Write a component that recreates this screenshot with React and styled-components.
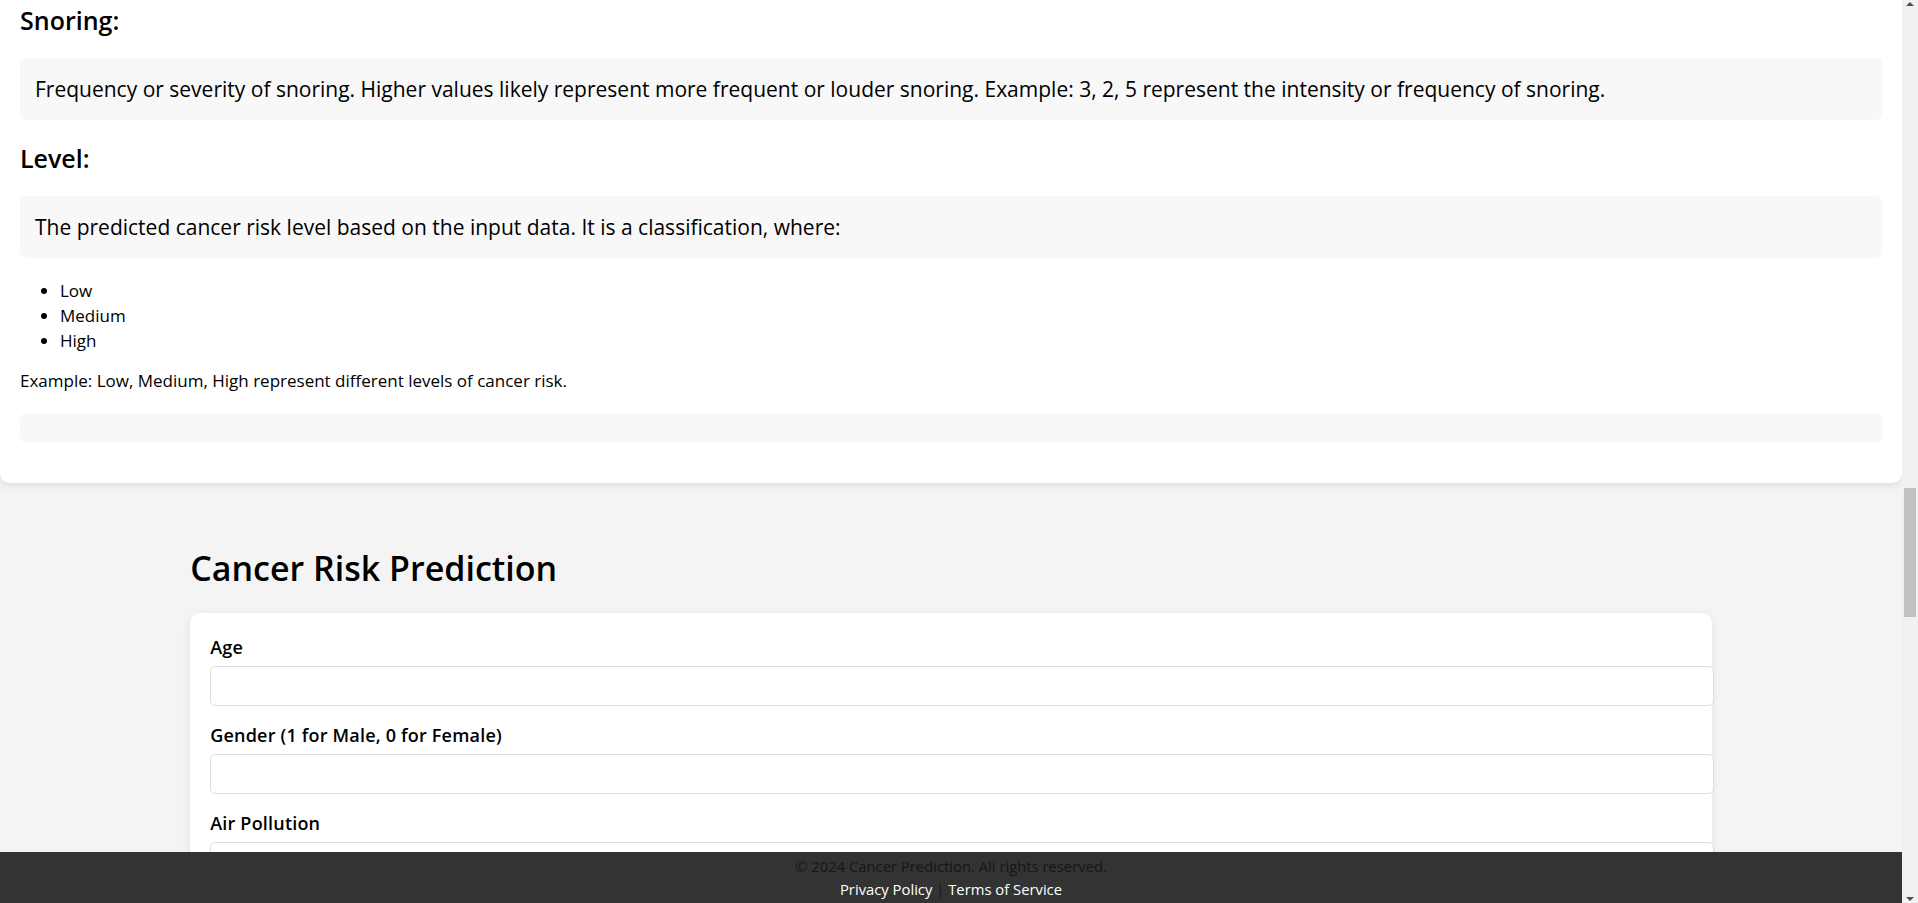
import { createGlobalStyle, styled } from 'styled-components';

const GlobalStyle = createGlobalStyle`
  html, body {
    margin: 0;
    padding: 0;
  }

  body {
    margin-right: 16px;
    background-color: #f4f4f4;
    color: #000;
    font-family: 'Open Sans', 'Liberation Sans', sans-serif;
    font-size: 17px;
  }
`;

const StyledInfoCard = styled.section`
  background-color: #fff;
  padding: 2px 20px 20px;
  border-radius: 0 0 10px 10px;
  box-shadow: 0 2px 10px rgba(0, 0, 0, 0.1);
`;

const StyledFieldTitle = styled.h2`
  font-size: 25px;
  font-weight: 600;
  line-height: 36px;
  margin: 20px 0;

  &:first-child {
    margin-top: 0;
  }
`;

const StyledDescription = styled.div`
  background-color: #f8f8f8;
  border-radius: 6px;
  padding: 15px;
  margin: 20px 0;
  font-size: 21px;
  line-height: 32px;
`;

const StyledLevelList = styled.ul`
  margin: 16px 0;
  padding-left: 40px;
  line-height: 25px;
`;

const StyledNote = styled.p`
  margin: 16px 0;
  line-height: 24px;
`;

const StyledFormSection = styled.main`
  width: 80%;
  margin: 0 auto;
  padding: 40px 0 80px;
`;

const StyledFormTitle = styled.h1`
  font-size: 34px;
  font-weight: 600;
  line-height: 48px;
  margin: 21px 0;
`;

const StyledFormCard = styled.form`
  background-color: #fff;
  border-radius: 10px;
  padding: 22px 20px 20px;
  box-shadow: 0 2px 10px rgba(0, 0, 0, 0.08);
`;

const StyledLabel = styled.label`
  display: block;
  font-size: 18px;
  font-weight: 600;
  letter-spacing: 0.2px;
  line-height: 24px;
  margin-bottom: 7px;
`;

const StyledInput = styled.input`
  display: block;
  box-sizing: content-box;
  width: 100%;
  height: 18px;
  padding: 10px;
  margin: 0 0 17px;
  border: 1px solid #ddd;
  border-radius: 5px;
  font-family: inherit;
  font-size: 16px;
  background-color: #fff;
`;

const StyledFooter = styled.footer`
  position: fixed;
  left: 0;
  right: 16px;
  bottom: 0;
  background-color: #333;
  color: #161616;
  text-align: center;
  font-size: 14.8px;
  line-height: 23px;
  padding: 3px 0 2px;
`;

const StyledFooterText = styled.p`
  margin: 0;
`;

const StyledFooterLink = styled.a`
  color: #fff;
  text-decoration: none;
`;

// the window's scrollbar, drawn as it stands in the screenshot
const StyledScrollbar = styled.div`
  position: fixed;
  top: 0;
  right: 0;
  bottom: 0;
  width: 16px;
  background-color: #f1f1f1;
  display: flex;
  flex-direction: column;
`;

const StyledScrollArrow = styled.div`
  height: 17px;
  display: flex;
  justify-content: center;
  align-items: ${({ $down }) => ($down ? 'flex-end' : 'flex-start')};
  padding: 2px 0;
  box-sizing: border-box;

  &::before {
    content: '';
    border-left: 4px solid transparent;
    border-right: 4px solid transparent;
    ${({ $down }) =>
      $down ? 'border-top: 4px solid #505050;' : 'border-bottom: 4px solid #505050;'}
  }
`;

const StyledScrollTrack = styled.div`
  flex: 1;
  display: flex;
  justify-content: center;
`;

const StyledScrollThumb = styled.div`
  width: 12px;
  height: 129px;
  margin-top: 471px;
  background-color: #c1c1c1;
`;

const levels = ['Low', 'Medium', 'High'];

const fields = [
  'Age',
  'Gender (1 for Male, 0 for Female)',
  'Air Pollution',
  'Alcohol use',
  'Dust Allergy',
  'Occupational Hazards',
  'Genetic Risk',
  'Chronic Lung Disease',
];

const App = () => {
  return (
    <>
      <GlobalStyle />
      <StyledInfoCard>
        <StyledFieldTitle>Snoring:</StyledFieldTitle>
        <StyledDescription>
          Frequency or severity of snoring. Higher values likely represent more frequent or louder
          snoring. Example: 3, 2, 5 represent the intensity or frequency of snoring.
        </StyledDescription>
        <StyledFieldTitle>Level:</StyledFieldTitle>
        <StyledDescription>
          The predicted cancer risk level based on the input data. It is a classification, where:
        </StyledDescription>
        <StyledLevelList>
          {levels.map((level) => (
            <li key={level}>{level}</li>
          ))}
        </StyledLevelList>
        <StyledNote>Example: Low, Medium, High represent different levels of cancer risk.</StyledNote>
        <StyledDescription />
      </StyledInfoCard>

      <StyledFormSection>
        <StyledFormTitle>Cancer Risk Prediction</StyledFormTitle>
        <StyledFormCard onSubmit={(e) => e.preventDefault()}>
          {fields.map((field, i) => (
            <div key={field}>
              <StyledLabel htmlFor={`field-${i}`}>{field}</StyledLabel>
              <StyledInput id={`field-${i}`} type='number' />
            </div>
          ))}
        </StyledFormCard>
      </StyledFormSection>

      <StyledFooter>
        <StyledFooterText>© 2024 Cancer Prediction. All rights reserved.</StyledFooterText>
        <StyledFooterText>
          <StyledFooterLink href='#'>Privacy Policy</StyledFooterLink> |{' '}
          <StyledFooterLink href='#'>Terms of Service</StyledFooterLink>
        </StyledFooterText>
      </StyledFooter>

      <StyledScrollbar aria-hidden='true'>
        <StyledScrollArrow />
        <StyledScrollTrack>
          <StyledScrollThumb />
        </StyledScrollTrack>
        <StyledScrollArrow $down />
      </StyledScrollbar>
    </>
  );
};

export default App;
